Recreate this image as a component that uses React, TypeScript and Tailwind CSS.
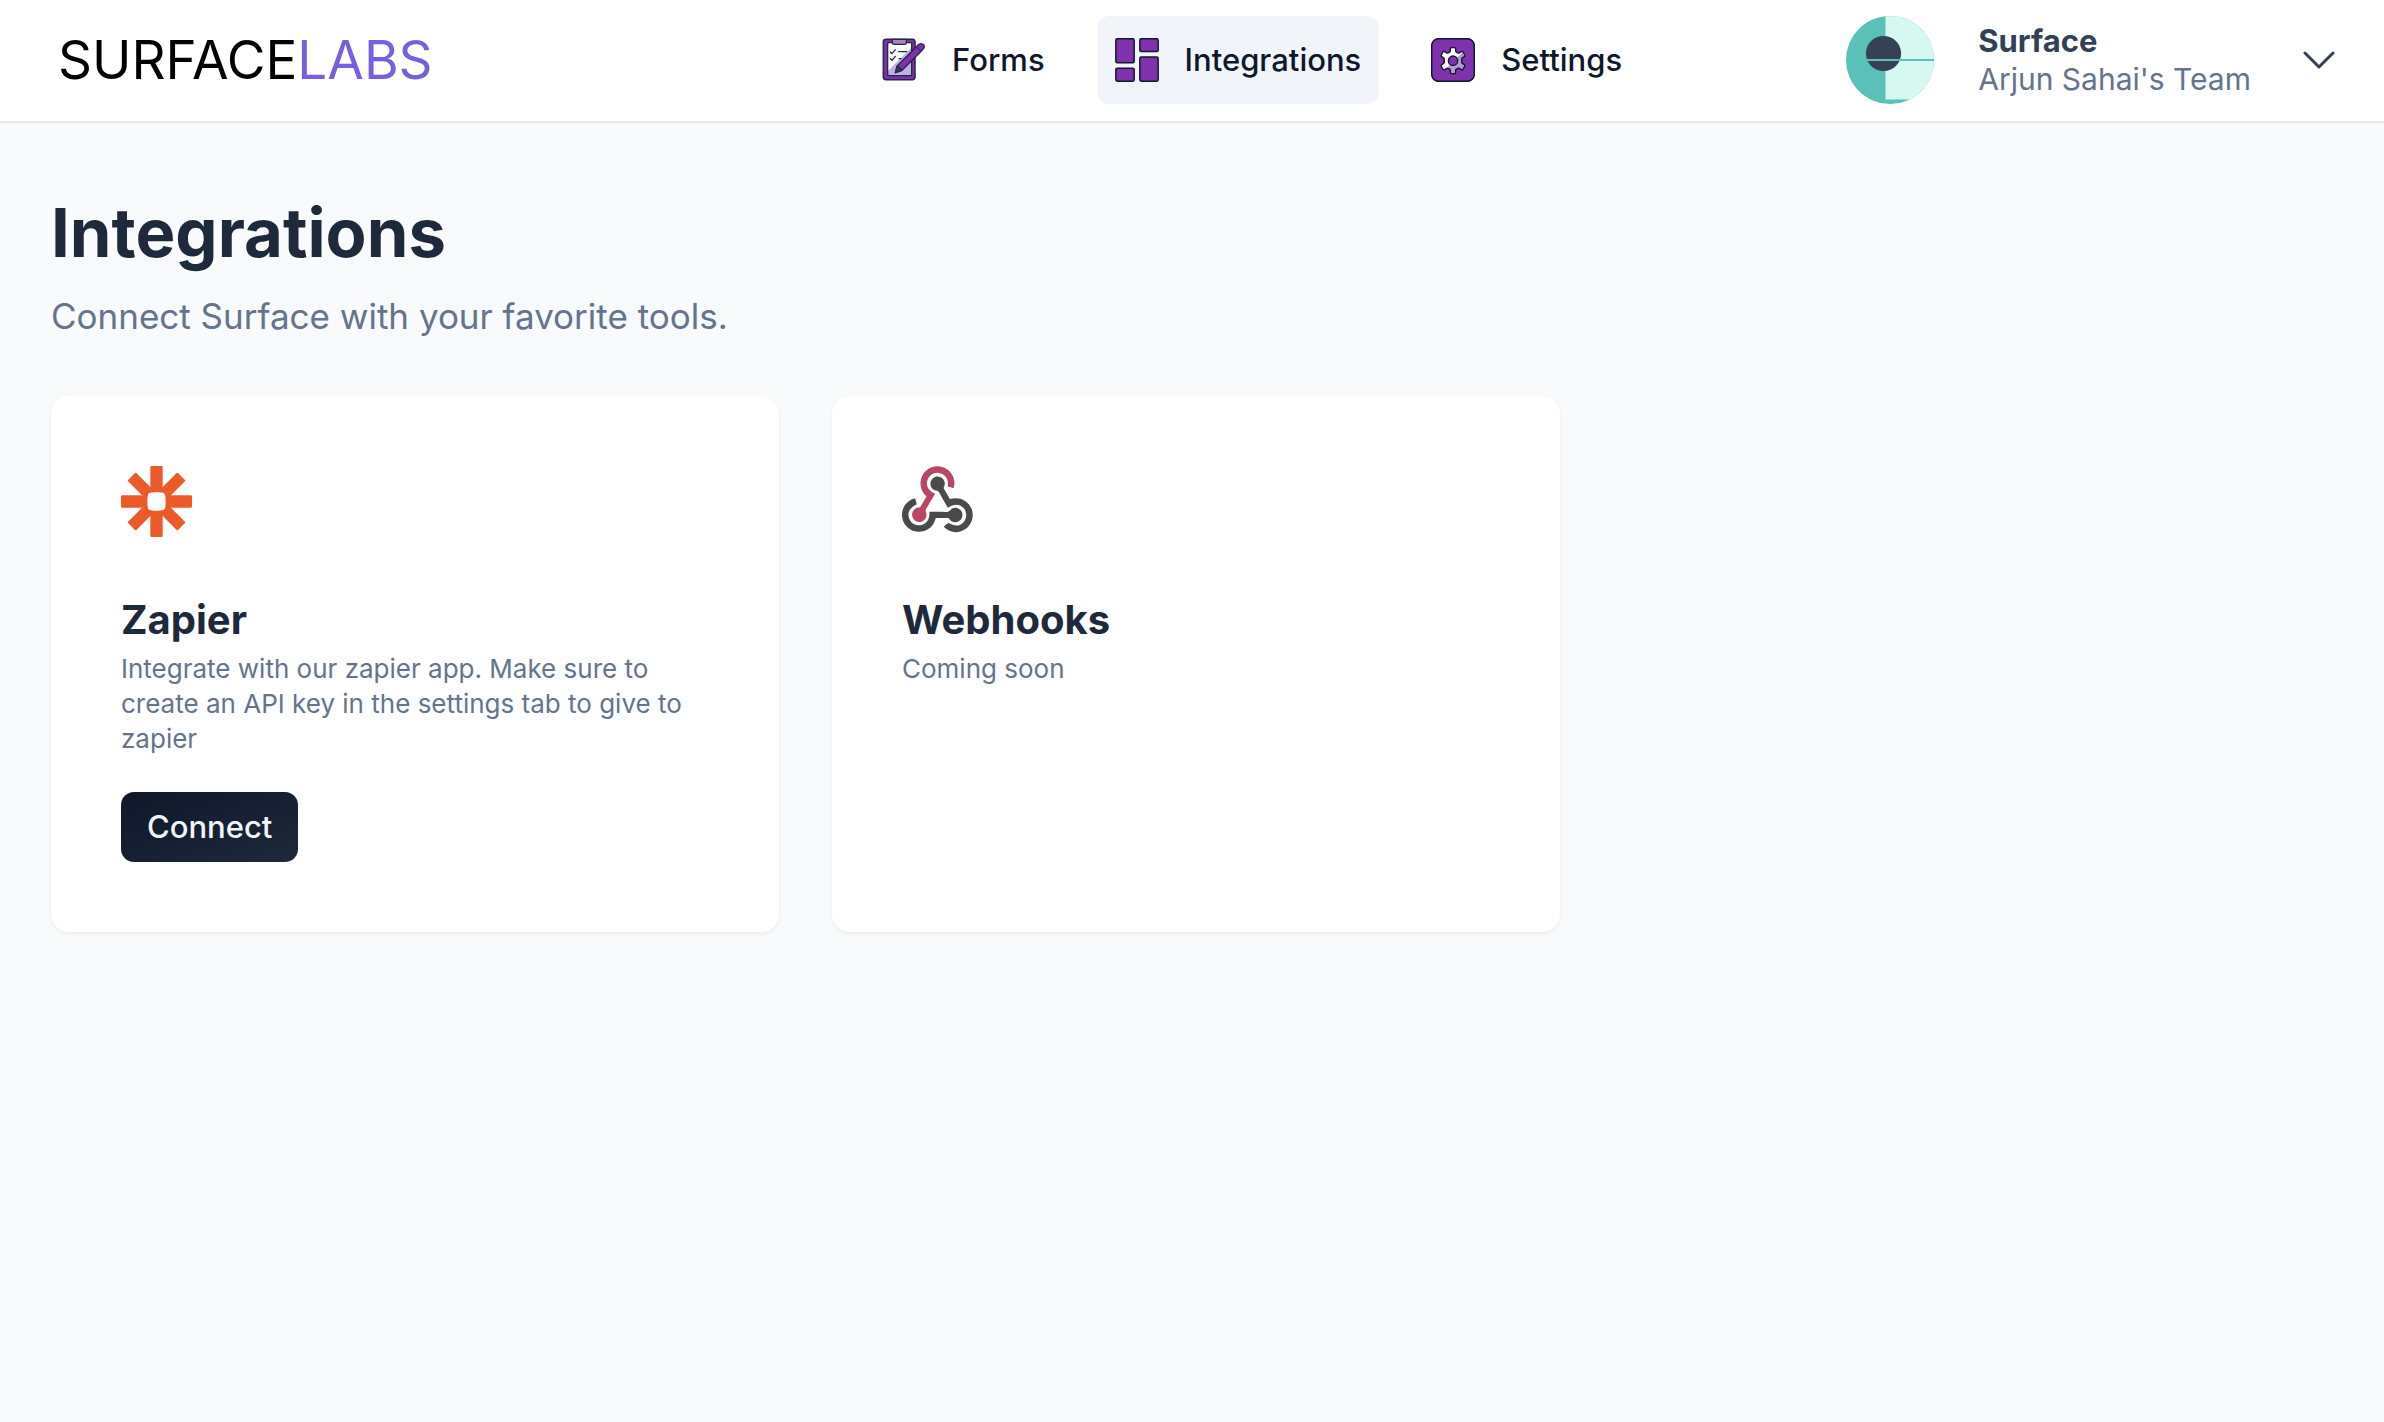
import React from "react";

function FormsIcon() {
  return (
    <svg viewBox="0 0 132 132" className="size-11 shrink-0" aria-hidden="true">
      <rect x="4" y="4" width="95" height="121" rx="8" fill="#7e2fab" stroke="#232a41" strokeWidth="4.5" />
      <rect x="17" y="14" width="72" height="99" rx="3" fill="#ffffff" />
      <path d="M89 28 17 100v10q0 3 3 3h66q3 0 3-3z" fill="#c1afe3" />
      <rect x="17" y="14" width="72" height="99" rx="3" fill="none" stroke="#232a41" strokeWidth="4" />
      <path d="M31 4h42v10q0 5-5 5H36q-5 0-5-5z" fill="#b080b8" stroke="#232a41" strokeWidth="3.5" />
      <g fill="none" stroke="#232a41" strokeWidth="4" strokeLinecap="round" strokeLinejoin="round">
        <path d="m25 42 5 5 10-12M50 41h24M25 62l5 5 10-12M51 62h6" />
      </g>
      <g stroke="#232a41" strokeWidth="4" strokeLinejoin="round">
        <path d="m46 83 62-62q6-6 14-3 8 5 3 13l-3 4-62 62-20 7z" fill="#7e2fab" />
        <path d="m46 83 14 14-20 7z" fill="#4b3564" />
        <path d="m103 26 14 14" fill="none" strokeWidth="3" />
      </g>
    </svg>
  );
}

function IntegrationsIcon() {
  return (
    <svg viewBox="0 0 132 132" className="size-11 shrink-0" aria-hidden="true">
      <g fill="#7e32ab" stroke="#11172c" strokeWidth="4.5">
        <rect x="2.5" y="2.5" width="55" height="72" rx="4" />
        <rect x="74.5" y="2.5" width="55" height="38" rx="4" />
        <rect x="2.5" y="90.5" width="55" height="39" rx="4" />
        <rect x="74.5" y="57" width="55" height="72.5" rx="4" />
      </g>
    </svg>
  );
}

function SettingsIcon() {
  const gear =
    "M58 32q0-3 3-3h10q3 0 3 3v7q0 3 3 4l4 2q3 1 5-1l5-3q3-2 5 1l5 9q2 3-1 5l-5 3q-3 2-3 5v8q0 3 3 5l5 3q3 2 1 5l-5 9q-2 3-5 1l-5-3q-2-2-5-1l-4 2q-3 1-3 4v7q0 3-3 3H61q-3 0-3-3v-7q0-3-3-4l-4-2q-3-1-5 1l-5 3q-3 2-5-1l-5-9q-2-3 1-5l5-3q3-2 3-5v-8q0-3-3-5l-5-3q-3-2-1-5l5-9q2-3 5-1l5 3q2 2 5 1l4-2q3-1 3-4z";
  return (
    <svg viewBox="0 0 132 132" className="size-11 shrink-0" aria-hidden="true">
      <defs>
        <clipPath id="gear-shape">
          <path d={gear} />
        </clipPath>
      </defs>
      <rect x="2" y="2" width="128" height="128" rx="21" fill="#7e32ab" stroke="#11172c" strokeWidth="4.5" />
      <path d={gear} fill="#ffffff" />
      <path d="M132 6 6 132h126z" fill="#b596cf" clipPath="url(#gear-shape)" />
      <path d={gear} fill="none" stroke="#11172c" strokeWidth="4" strokeLinejoin="round" />
      <circle cx="66" cy="68" r="14" fill="#7e32ab" stroke="#11172c" strokeWidth="4" />
    </svg>
  );
}

function TeamAvatar() {
  return (
    <svg viewBox="0 0 88 88" className="size-[88px] shrink-0 rounded-full" aria-hidden="true">
      <rect width="88" height="88" fill="#5bc0b7" />
      <rect x="39.5" width="48.5" height="83.5" fill="#d5f9f0" />
      <circle cx="37.5" cy="37.5" r="17.6" fill="#364154" />
      <rect x="20" y="43" width="68" height="2" fill="#5bc0b7" />
    </svg>
  );
}

function ZapierIcon() {
  return (
    <svg viewBox="-106.5 -106.5 213 213" className="size-[71px]" role="img" aria-label="Zapier logo">
      <g fill="#eb5a28">
        <rect x="-18.5" y="-106.5" width="37" height="213" rx="4" />
        <rect x="-106.5" y="-18.5" width="213" height="37" rx="4" />
        <rect x="-17.5" y="-106" width="35" height="212" rx="3" transform="rotate(45)" />
        <rect x="-17.5" y="-106" width="35" height="212" rx="3" transform="rotate(-45)" />
        <circle r="38" />
      </g>
      <path d="M0-27.5C20-27.5 25-25 26-19 28-8 28 8 26 19 25 25 20 27.5 0 27.5S-25 25-26 19C-28 8-28-8-26-19-25-25-20-27.5 0-27.5Z" fill="#ffffff" />
    </svg>
  );
}

function WebhooksIcon() {
  return (
    <svg viewBox="0 0 256 239" preserveAspectRatio="xMidYMin meet" className="size-[71px]" role="img" aria-label="Webhooks logo">
      <path
        fill="#b94665"
        d="M119.54 100.503c-10.61 17.836-20.775 35.108-31.152 52.25-2.665 4.401-3.984 7.986-1.855 13.58 5.878 15.454-2.414 30.493-17.998 34.575-14.697 3.851-29.016-5.808-31.932-21.543-2.584-13.927 8.224-27.58 23.58-29.757 1.286-.184 2.6-.205 4.762-.367l23.358-39.168C73.612 95.465 64.868 78.39 66.803 57.23c1.368-14.957 7.25-27.883 18-38.477 20.59-20.288 52.002-23.573 76.246-8.001 23.284 14.958 33.948 44.094 24.858 69.031-6.854-1.858-13.756-3.732-21.343-5.79 2.854-13.865.743-26.315-8.608-36.981-6.178-7.042-14.106-10.733-23.12-12.093-18.072-2.73-35.815 8.88-41.08 26.618-5.976 20.132 3.069 36.575 27.784 48.967z"
      />
      <path
        fill="#4b4b4b"
        d="M149.841 79.41c7.475 13.187 15.065 26.573 22.587 39.836 38.02-11.763 66.686 9.284 76.97 31.817 12.422 27.219 3.93 59.457-20.465 76.25-25.04 17.238-56.707 14.293-78.892-7.851 5.654-4.733 11.336-9.487 17.407-14.566 21.912 14.192 41.077 13.524 55.305-3.282 12.133-14.337 11.87-35.714-.615-49.75-14.408-16.197-33.707-16.691-57.035-1.143-9.677-17.168-19.522-34.199-28.893-51.491-3.16-5.828-6.648-9.21-13.77-10.443-11.893-2.062-19.571-12.275-20.032-23.717-.453-11.316 6.214-21.545 16.634-25.53 10.322-3.949 22.435-.762 29.378 8.014 5.674 7.17 7.477 15.24 4.491 24.083-.83 2.466-1.905 4.852-3.07 7.774z"
      />
      <path
        fill="#4a4a4a"
        d="M167.707 187.21h-45.77c-4.387 18.044-13.863 32.612-30.19 41.876-12.693 7.2-26.373 9.641-40.933 7.29-26.808-4.323-48.728-28.456-50.658-55.63-2.184-30.784 18.975-58.147 47.178-64.293 1.947 7.071 3.915 14.21 5.862 21.264-25.876 13.202-34.832 29.836-27.59 50.636 6.375 18.304 24.484 28.337 44.147 24.457 20.08-3.962 30.204-20.65 28.968-47.432 19.036 0 38.088-.197 57.126.097 7.434.117 13.173-.654 18.773-7.208 9.22-10.784 26.191-9.811 36.121.374 10.148 10.409 9.662 27.157-1.077 37.127-10.361 9.62-26.73 9.106-36.424-1.26-1.992-2.136-3.562-4.673-5.533-7.298z"
      />
    </svg>
  );
}

type NavItemProps = {
  icon: React.ReactNode;
  label: string;
  active?: boolean;
};

function NavItem({ icon, label, active = false }: NavItemProps) {
  return (
    <a
      href="#"
      aria-current={active ? "page" : undefined}
      className={
        active
          ? "flex h-[88px] items-center gap-[26px] rounded-[13px] bg-[#f1f5f9] px-[18px] text-[31px] font-medium text-[#0f172a]"
          : "flex h-[88px] items-center gap-[26px] rounded-[13px] px-[18px] text-[31px] font-medium text-[#0f172a]"
      }
    >
      {icon}
      {label}
    </a>
  );
}

type IntegrationCardProps = {
  icon: React.ReactNode;
  name: string;
  description: string;
  action?: string;
};

function IntegrationCard({ icon, name, description, action }: IntegrationCardProps) {
  return (
    <article className="flex flex-col items-start rounded-[18px] bg-white p-[70px] shadow-[0_2px_4px_rgba(15,23,42,0.06)]">
      {icon}
      <h2 className="mt-[52px] text-[40px] leading-[62px] font-bold text-[#1e293b]">{name}</h2>
      <p className="text-[26px] leading-[35px] text-[#64748b]">{description}</p>
      {action && (
        <button
          type="button"
          className="mt-9 h-[70px] rounded-[13px] bg-linear-to-br from-[#0f172a] to-[#1e293b] px-[26px] text-[31px] font-medium text-[#f1f5f9]"
        >
          {action}
        </button>
      )}
    </article>
  );
}

export default function App() {
  return (
    <div className="min-h-screen bg-[#f8fafc] font-['Inter',sans-serif]">
      <header className="flex items-center justify-between border-b-2 border-[#e2e8f0] bg-white pt-4 pr-[49px] pb-[17px] pl-[58px]">
        <a href="#" className="w-[600px] text-[53px] leading-[88px] text-black">
          SURFACE<span className="text-[#775fe0]">LABS</span>
        </a>
        <nav className="flex gap-[34px]">
          <NavItem icon={<FormsIcon />} label="Forms" />
          <NavItem icon={<IntegrationsIcon />} label="Integrations" active />
          <NavItem icon={<SettingsIcon />} label="Settings" />
        </nav>
        <button type="button" className="flex items-center text-left leading-[39px]">
          <TeamAvatar />
          <span className="ml-11 flex flex-col">
            <span className="text-[31px] font-bold text-[#334155]">Surface</span>
            <span className="text-[30px] text-[#64748b]">Arjun Sahai&apos;s Team</span>
          </span>
          <svg viewBox="0 0 32 20" className="ml-[52px] h-5 w-8 shrink-0" fill="none" stroke="#334155" strokeWidth="3" strokeLinecap="round" strokeLinejoin="round" aria-hidden="true">
            <path d="m2 3 14 14L30 3" />
          </svg>
        </button>
      </header>
      <main className="pt-[70px] pr-[43px] pb-[70px] pl-[51px]">
        <h1 className="text-[67px] leading-[80px] font-bold text-[#1e293b]">Integrations</h1>
        <p className="mt-[17px] text-[35px] leading-[53px] text-[#64748b]">Connect Surface with your favorite tools.</p>
        <section className="mt-[53px] grid grid-cols-3 gap-[53px]">
          <IntegrationCard
            icon={<ZapierIcon />}
            name="Zapier"
            description="Integrate with our zapier app. Make sure to create an API key in the settings tab to give to zapier"
            action="Connect"
          />
          <IntegrationCard icon={<WebhooksIcon />} name="Webhooks" description="Coming soon" />
        </section>
      </main>
    </div>
  );
}
